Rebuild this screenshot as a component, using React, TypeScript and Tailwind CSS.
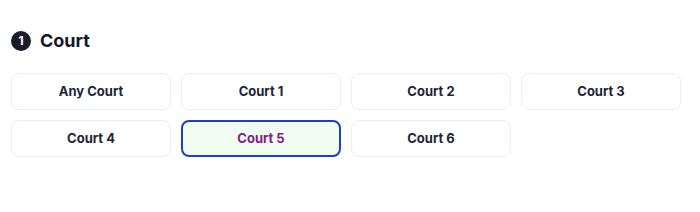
import React from "react";

const courts = ["Any Court", "Court 1", "Court 2", "Court 3", "Court 4", "Court 5", "Court 6"];

export default function App() {
  return (
    <div className="w-[700px] h-[212px] bg-white pl-[11px] pt-[27px]" style={{ fontFamily: "Inter, 'Liberation Sans', sans-serif" }}>
      <div className="flex items-center gap-[9px] h-7">
        <span className="flex items-center justify-center w-[20px] h-[20px] rounded-full bg-[#1a1d29] text-white text-[12px] font-bold leading-none">1</span>
        <span className="text-lg font-bold text-[#111827]">Court</span>
      </div>
      <div className="mt-[18px] grid grid-cols-4 gap-[10px] w-[670px]">
        {courts.map((c) => {
          const sel = c === "Court 5";
          return (
            <button
              key={c}
              className={
                sel
                  ? "h-[37px] rounded-lg border-2 border-[#1d3fc7] bg-[#f1fdf1] text-[13px] font-bold text-[#86198f]"
                  : "h-[37px] rounded-lg border border-[#eaedf1] bg-white text-[13px] font-bold text-[#1e2538]"
              }
            >
              {c}
            </button>
          );
        })}
      </div>
    </div>
  );
}
